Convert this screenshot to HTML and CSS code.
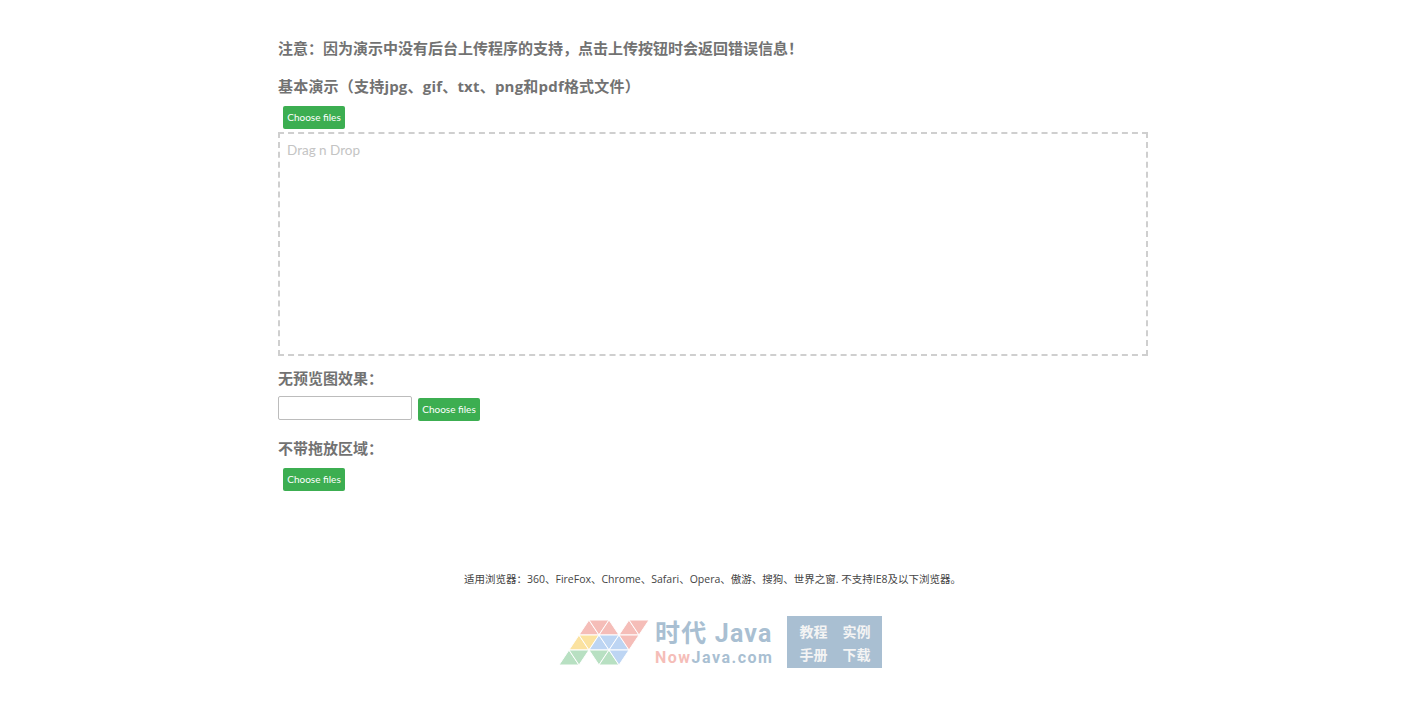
FILE: index.html
```html
<!DOCTYPE html>
<html lang="zh-CN">
<head>
  <meta charset="UTF-8" />
  <title>文件上传演示</title>
  <link rel="stylesheet" href="styles.css">
</head>
<body>
  <div class="container">
    <h3 class="note">注意：因为演示中没有后台上传程序的支持，点击上传按钮时会返回错误信息！</h3>

    <h3 class="title title-one">基本演示（支持jpg、gif、txt、png和pdf格式文件）</h3>
    <div class="actions"><a class="btn">Choose files</a></div>
    <div class="dropzone">Drag n Drop</div>

    <h3 class="title title-two">无预览图效果：</h3>
    <div class="file-row">
      <input class="file-name" type="text">
      <a class="btn">Choose files</a>
    </div>

    <h3 class="title title-three">不带拖放区域：</h3>
    <div class="actions"><a class="btn">Choose files</a></div>
  </div>

  <footer>
    <p class="browsers">适用浏览器：360、FireFox、Chrome、Safari、Opera、傲游、搜狗、世界之窗. 不支持IE8及以下浏览器。</p>
    <div class="brand">
      <svg class="logo-mark" width="91" height="47" viewBox="0 0 91 47">
        <g stroke="white" stroke-width="1" stroke-linejoin="round">
          <!-- top row -->
          <polygon fill="#f5bdb8" points="20,16 40,16 30,1"/>
          <polygon fill="#f5bdb8" points="30,1 50,1 40,16"/>
          <polygon fill="#f5bdb8" points="40,16 60,16 50,1"/>
          <polygon fill="#f5bdb8" points="60,16 80,16 70,1"/>
          <polygon fill="#f5bdb8" points="70,1 90,1 80,16"/>
          <!-- middle row -->
          <polygon fill="#fbe2a0" points="10,31 30,31 20,16"/>
          <polygon fill="#fbe2a0" points="20,16 40,16 30,31"/>
          <polygon fill="#bdd5f3" points="30,31 50,31 40,16"/>
          <polygon fill="#bdd5f3" points="40,16 60,16 50,31"/>
          <polygon fill="#bdd5f3" points="50,31 70,31 60,16"/>
          <polygon fill="#f5bdb8" points="60,16 80,16 70,31"/>
          <!-- bottom row -->
          <polygon fill="#b8e0c2" points="0,46 20,46 10,31"/>
          <polygon fill="#b8e0c2" points="10,31 30,31 20,46"/>
          <polygon fill="#b8e0c2" points="30,31 50,31 40,46"/>
          <polygon fill="#b8e0c2" points="40,46 60,46 50,31"/>
          <polygon fill="#bdd5f3" points="50,31 70,31 60,46"/>
        </g>
      </svg>
      <div class="logo-text">
        <div class="logo-cn">时代 Java</div>
        <div class="logo-en"><span class="now">Now</span>Java.com</div>
      </div>
      <div class="links">
        <span>教程</span><span>实例</span>
        <span>手册</span><span>下载</span>
      </div>
    </div>
  </footer>
</body>
</html>
```

FILE: styles.css
```css
body {
  margin: 0;
  background-color: white;
  color: #333;
  font-family: "Open Sans", "Noto Sans CJK SC", sans-serif;
  font-size: 14px;
}

.container {
  width: 870px;
  margin-left: 278px;
  padding-top: 38px;
}

h3 {
  margin: 0;
  color: #727272;
  font-size: 15px;
  font-weight: 700;
  line-height: 20px;
}

.title {
  margin-top: 19px;
}

.title-one {
  margin-top: 18px;
  letter-spacing: 0.2px;
}

.title-two {
  margin-top: 12px;
}

.title-three {
  margin-top: 17px;
}

.actions {
  margin-top: 10px;
  padding-left: 5px;
  display: flex;
}

.btn {
  display: block;
  width: 62px;
  height: 23px;
  background-color: #3cae51;
  border-radius: 2px;
  color: white;
  font-family: Lato, "Open Sans", sans-serif;
  font-size: 10px;
  line-height: 23px;
  text-align: center;
}

.dropzone {
  box-sizing: border-box;
  height: 224px;
  margin-top: 3px;
  padding: 6px 7px;
  border: 2px dashed #cfcfcf;
  color: #c4c4c4;
  font-family: Lato, "Open Sans", sans-serif;
  font-size: 13.5px;
  line-height: 20px;
}

.file-row {
  display: flex;
  align-items: flex-start;
  gap: 6px;
  margin-top: 8px;
}

.file-row .btn {
  margin-top: 2px;
}

.file-name {
  box-sizing: border-box;
  width: 134px;
  height: 24px;
  margin: 0;
  border: 1px solid #bcbcbc;
  border-radius: 2px;
  background: white;
}

footer {
  margin-top: 80px;
}

.browsers {
  margin: 0;
  color: #444;
  font-size: 10.5px;
  line-height: 16px;
  text-align: center;
}

.brand {
  display: flex;
  align-items: flex-start;
  margin-top: 29px;
  margin-left: 559px;
}

.logo-mark {
  margin-top: 3px;
}

.logo-text {
  width: 132px;
  margin-left: 5px;
  margin-top: 3px;
  font-family: Roboto, "Noto Sans CJK SC", sans-serif;
  font-weight: 700;
  color: #a9bfd2;
  white-space: nowrap;
}

.logo-cn {
  font-size: 25px;
  line-height: 30px;
  letter-spacing: 1.2px;
}

.logo-en {
  font-size: 16px;
  line-height: 18px;
  letter-spacing: 1.5px;
}

.now {
  color: #f5bdb8;
}

.links {
  display: grid;
  grid-template-columns: 1fr 1fr;
  align-items: center;
  justify-items: center;
  box-sizing: border-box;
  width: 95px;
  height: 52px;
  padding: 3px 4px 3px 5px;
  background-color: #a9bfd2;
  color: #f4f4f4;
  font-size: 14px;
  font-weight: 700;
}
```
